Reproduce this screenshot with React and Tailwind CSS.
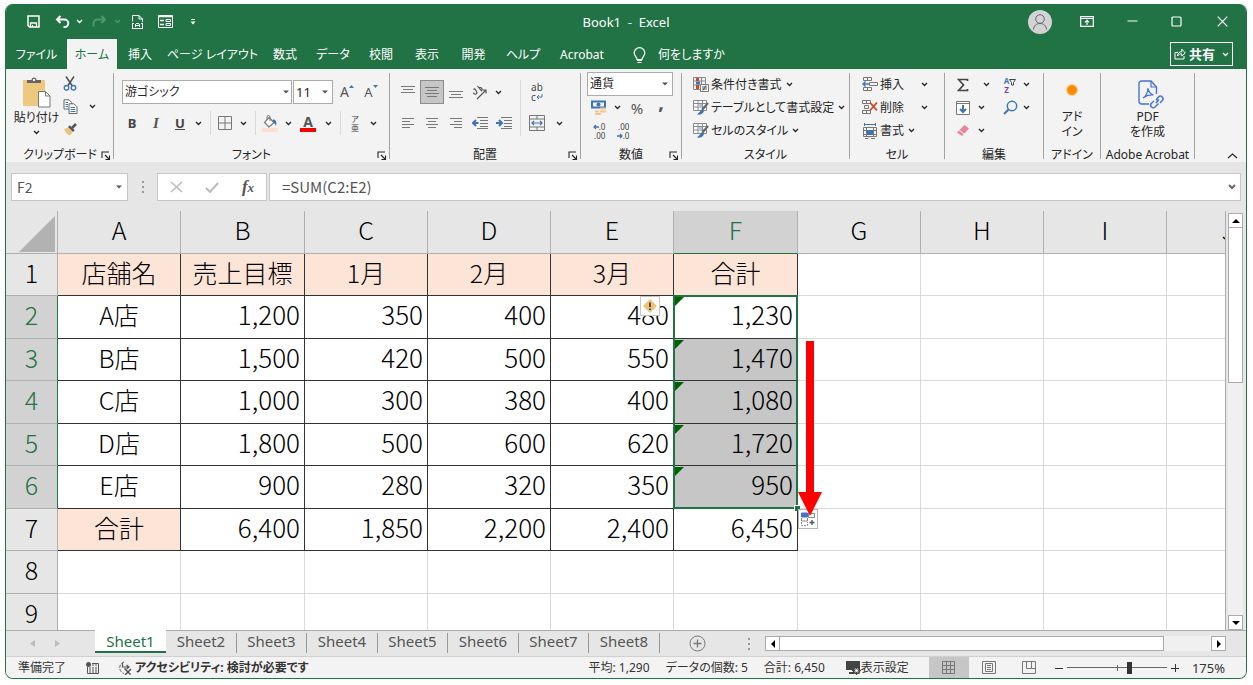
import clsx from 'clsx';

const TABS = [
  { label: 'ファイル', width: 'w-[61px]' },
  { label: 'ホーム', width: 'w-[50px]', active: true },
  { label: '挿入', width: 'w-[46px]' },
  { label: 'ページ レイアウト', width: 'w-[99px]' },
  { label: '数式', width: 'w-[46px]' },
  { label: 'データ', width: 'w-[50px]' },
  { label: '校閲', width: 'w-[46px]' },
  { label: '表示', width: 'w-[46px]' },
  { label: '開発', width: 'w-[47px]' },
  { label: 'ヘルプ', width: 'w-[52px]' },
  { label: 'Acrobat', width: 'w-[66px]' },
];

const COLUMNS = [
  { name: 'A', width: 'w-[123px]' },
  { name: 'B', width: 'w-[124px]' },
  { name: 'C', width: 'w-[123px]' },
  { name: 'D', width: 'w-[123px]' },
  { name: 'E', width: 'w-[123px]' },
  { name: 'F', width: 'w-[124px]' },
  { name: 'G', width: 'w-[123px]' },
  { name: 'H', width: 'w-[123px]' },
  { name: 'I', width: 'w-[123px]' },
  { name: 'J', width: 'w-[123px]' },
];

const ROWS = [
  ['店舗名', '売上目標', '1月', '2月', '3月', '合計'],
  ['A店', '1,200', '350', '400', '480', '1,230'],
  ['B店', '1,500', '420', '500', '550', '1,470'],
  ['C店', '1,000', '300', '380', '400', '1,080'],
  ['D店', '1,800', '500', '600', '620', '1,720'],
  ['E店', '900', '280', '320', '350', '950'],
  ['合計', '6,400', '1,850', '2,200', '2,400', '6,450'],
  [],
  [],
];

const SHEETS = ['Sheet1', 'Sheet2', 'Sheet3', 'Sheet4', 'Sheet5', 'Sheet6', 'Sheet7', 'Sheet8'];

const SELECTED_COL = 5;
const isSelectedRow = (row) => row >= 1 && row <= 5;

function Icon({ w = 16, h = 16, children, className }) {
  return (
    <svg
      width={w}
      height={h}
      viewBox={`0 0 ${w} ${h}`}
      fill="none"
      stroke="currentColor"
      className={clsx('shrink-0', className)}
      aria-hidden="true"
    >
      {children}
    </svg>
  );
}

function Chevron({ className }) {
  return (
    <Icon w={7} h={5} className={className}>
      <path d="M1 1l2.5 2.5L6 1" strokeWidth="1.3" />
    </Icon>
  );
}

function ChevronButton({ label, className }) {
  return (
    <button
      type="button"
      aria-label={label}
      className={clsx('flex h-5 w-3 shrink-0 items-center justify-center', className)}
    >
      <Chevron />
    </button>
  );
}

function Tool({ label, width = 'w-6', height = 'h-6', className, children }) {
  return (
    <button
      type="button"
      aria-label={label}
      className={clsx('flex shrink-0 items-center justify-center', height, width, className)}
    >
      {children}
    </button>
  );
}

function Divider() {
  return <span className="mr-0.5 ml-1.5 h-6 w-px shrink-0 bg-[#d8d8d8]" />;
}

function Triangle({ className = 'fill-[#555]' }) {
  return (
    <Icon w={6} h={4} className={className}>
      <path d="M0 .5h6L3 3.5z" stroke="none" fill="inherit" />
    </Icon>
  );
}

function Group({ label, width, launcher, children }) {
  return (
    <section
      aria-label={label}
      className={clsx('flex h-[86px] shrink-0 flex-col border-r border-[#a3a3a3]', width)}
    >
      <div className="h-[74px] shrink-0">{children}</div>
      <div className="relative text-center leading-[15px] whitespace-nowrap">
        {label}
        {launcher && (
          <button
            type="button"
            aria-label={`${label}の設定`}
            className="absolute top-1 right-0.5"
          >
            <Icon w={10} h={9}>
              <path d="M1 7V1h7M4 4l4 4M8.500 4.500V8.500H4.500" strokeWidth="1.1" />
            </Icon>
          </button>
        )}
      </div>
    </section>
  );
}

function TitleBar() {
  return (
    <header className="grid h-[35px] grid-cols-[1fr_auto_1fr] items-center text-white">
      <div className="flex items-center pl-[15px]">
        <Tool label="上書き保存">
          <Icon w={13} h={13}>
            <path d="M1 1h11v11H2.500L1 10.500z" strokeWidth="1.500" />
            <path d="M3.500 12V8h6v4" strokeWidth="1.300" />
            <path d="M5.500 10v2" />
          </Icon>
        </Tool>
        <Tool label="元に戻す" width="w-7" className="ml-1">
          <Icon w={16} h={14}>
            <path d="M5.500 1L2 4.500 5.500 8M2 4.500h7.500a3.800 3.800 0 0 1 0 7.600H8.500" strokeWidth="2" />
          </Icon>
        </Tool>
        <ChevronButton label="元に戻す履歴" className="-ml-1" />
        <Tool label="やり直し" width="w-7" className="text-[#4d9670]">
          <Icon w={16} h={14}>
            <path d="M10.500 1L14 4.500 10.500 8M14 4.500H6.500a4 4 0 0 0-4 4v3" strokeWidth="2" />
          </Icon>
        </Tool>
        <ChevronButton label="やり直し履歴" className="-ml-0.5 text-[#4d9670]" />
        <Tool label="印刷プレビュー" className="ml-0.5">
          <Icon w={13} h={16}>
            <path d="M1.500 7.500V1.500h6.500l3.500 3.500v3M8 1.500V5h3.500" />
            <path d="M1 9.500h2m2 0h3m2 0h2M1 14.500h11M1.500 9v5M11.500 9v5M4.500 10v3M8.500 10v3M4.500 11.500h4" />
          </Icon>
        </Tool>
        <Tool label="フォーム" className="ml-1">
          <Icon w={15} h={13}>
            <path d="M.5.5h14v12H.5z" />
            <path d="M0 1.500h15M2 5.500h4M2 9.500h4" strokeWidth="1.500" />
            <path d="M8 4.500h4.500v2H8zM8 8.500h4.500v2H8z" />
          </Icon>
        </Tool>
        <Tool label="クイック アクセス ツール バーのユーザー設定" className="ml-1">
          <Icon w={6} h={6}>
            <path d="M1 .5h4" />
            <path d="M.5 2.500h5L3 5.500z" fill="currentColor" stroke="none" />
          </Icon>
        </Tool>
      </div>
      <h1 className="text-[13px] whitespace-pre">Book1  -  Excel</h1>
      <div className="flex items-center justify-end">
        <button type="button" aria-label="アカウント" className="mr-4">
          <Icon w={24} h={24} className="text-[#666]">
            <circle cx="12" cy="12" r="12" fill="#d3d3d3" stroke="none" />
            <circle cx="12" cy="9" r="4.300" />
            <path d="M5.500 19.500c.3-4 3-6 6.500-6s6.200 2 6.500 6" />
          </Icon>
        </button>
        <Tool label="リボンの表示オプション" width="w-[38px]">
          <Icon w={14} h={11}>
            <path d="M.7.7h12.600v9.600H.7zM1 2.500h12M7 9V4.500M5 6.300l2-2 2 2" strokeWidth="1.200" />
          </Icon>
        </Tool>
        <Tool label="最小化" width="w-11" className="ml-1">
          <Icon w={11} h={11}>
            <path d="M.5 5h10" strokeWidth="1.200" />
          </Icon>
        </Tool>
        <Tool label="最大化" width="w-11">
          <Icon w={11} h={11}>
            <rect x="1" y="1" width="9" height="9" rx="1" strokeWidth="1.200" />
          </Icon>
        </Tool>
        <Tool label="閉じる" width="w-12">
          <Icon w={11} h={11}>
            <path d="M.7.7l9.600 9.600M10.300.7L.7 10.300" strokeWidth="1.200" />
          </Icon>
        </Tool>
      </div>
    </header>
  );
}

function TabBar() {
  return (
    <nav className="flex h-[30px] items-center text-white">
      {TABS.map((tab) => (
        <button
          key={tab.label}
          type="button"
          className={clsx(
            'h-full shrink-0 pt-0.5 text-center whitespace-nowrap',
            tab.width,
            tab.active && 'bg-[#f3f3f3] text-[#217346]'
          )}
        >
          {tab.label}
        </button>
      ))}
      <button type="button" className="ml-[18px] flex items-center gap-3 pt-0.5">
        <Icon w={13} h={17}>
          <path
            d="M4 12.500c0-2.500-2.800-3.500-2.800-6.500a5.300 5.300 0 0 1 10.600 0c0 3-2.800 4-2.800 6.500zM4.500 15.500h4M4 13.500h5"
            strokeWidth="1.200"
          />
        </Icon>
        何をしますか
      </button>
      <button
        type="button"
        className="mr-[13px] ml-auto flex h-6 items-center gap-[3px] border border-white px-[3px] font-bold"
      >
        <Icon w={12} h={12}>
          <path d="M4 4.500H1v6.500h9V8" />
          <path d="M3.500 8c.3-3 2-4.300 4.300-4.300V1.200L11.300 5 7.800 8V5.800C6 5.800 4.700 6.500 3.500 8z" />
        </Icon>
        <span className="text-[13px]">共有</span>
        <Chevron className="ml-1" />
      </button>
    </nav>
  );
}

function ClipboardGroup() {
  return (
    <Group label="クリップボード" width="w-[107px]" launcher>
      <div className="flex pt-1 pl-2">
        <button type="button" className="flex w-[43px] shrink-0 flex-col items-center">
          <Icon w={29} h={31}>
            <path d="M1 3h22v26H1z" fill="#edc87e" stroke="none" />
            <path d="M5 6V3h4.500a2.500 2.500 0 0 1 5 0H19v3z" fill="#666" stroke="none" />
            <circle cx="12" cy="3" r="1.200" fill="#f3f3f3" stroke="none" />
            <path d="M16.500 14.500h7l4.500 4.500v11H16.500z" fill="#fff" stroke="#777" />
            <path d="M23.500 14.500V19H28" stroke="#777" />
          </Icon>
          <span className="mt-0.5 leading-4 whitespace-nowrap">貼り付け</span>
          <Chevron className="mt-1" />
        </button>
        <div className="-mt-1.5 flex flex-col -space-y-px">
          <Tool label="切り取り">
            <Icon w={14} h={15}>
              <path d="M3 .5l6.300 9.500M11 .5L4.700 10" stroke="#555" strokeWidth="1.600" />
              <circle cx="3.500" cy="11.800" r="2.300" stroke="#3c76b5" strokeWidth="1.300" />
              <circle cx="10.500" cy="11.800" r="2.300" stroke="#3c76b5" strokeWidth="1.300" />
            </Icon>
          </Tool>
          <div className="flex items-center">
            <Tool label="コピー">
              <Icon w={15} h={15}>
                <path d="M1 .8h5l2.500 2.500V10H1z" fill="#fff" stroke="#666" />
                <path d="M6 4.800h5l3 3v6.700H6z" fill="#fff" stroke="#666" />
                <path d="M2.500 3.500h2.500M2.500 5.500h2.500M2.500 7.500h2.500M7.500 8.500h4.500M7.500 10.500h5M7.500 12.500h5" stroke="#3c76b5" />
              </Icon>
            </Tool>
            <ChevronButton label="コピーのオプション" className="ml-1" />
          </div>
          <Tool label="書式のコピー/貼り付け">
            <Icon w={14} h={13}>
              <path d="M1 6l4-1.500 4.500 4.500L7 12.500C4.500 11.500 2.500 9.500 1 6z" fill="#edc17c" stroke="none" />
              <path d="M5 4l5 5 1.700-1.700-5-5z" fill="#555" stroke="none" />
              <path d="M9 5l4-4" stroke="#555" strokeWidth="2.500" />
            </Icon>
          </Tool>
        </div>
      </div>
    </Group>
  );
}

function FontGroup() {
  return (
    <Group label="フォント" width="w-[276px]" launcher>
      <div className="flex h-full flex-col gap-[7px] pt-[7px] pl-2">
        <div className="flex h-6 items-center">
          <div className="flex h-6 w-[170px] items-center border border-[#ababab] bg-white px-0.5">
            <input
              aria-label="フォント名"
              defaultValue="游ゴシック"
              className="w-full min-w-0 bg-transparent outline-none"
            />
            <Triangle />
          </div>
          <div className="ml-px flex h-6 w-10 items-center border border-[#ababab] bg-white px-0.5">
            <input
              aria-label="フォント サイズ"
              defaultValue="11"
              className="w-full min-w-0 bg-transparent text-[13px] outline-none"
            />
            <Triangle className="mr-0.5 fill-[#555]" />
          </div>
          <Tool label="フォント サイズの拡大" className="ml-0.5">
            <span className="text-[14px] text-[#555]">A</span>
            <Icon w={5} h={3} className="mb-3">
              <path d="M0 3L2.500 0 5 3z" fill="#3c76b5" stroke="none" />
            </Icon>
          </Tool>
          <Tool label="フォント サイズの縮小">
            <span className="text-[13px] text-[#555]">A</span>
            <Icon w={5} h={3} className="mb-3">
              <path d="M0 0l2.500 3L5 0z" fill="#3c76b5" stroke="none" />
            </Icon>
          </Tool>
        </div>
        <div className="-ml-0.5 flex h-6 items-center">
          <Tool label="太字">
            <b className="text-[13px] text-[#444]">B</b>
          </Tool>
          <Tool label="斜体">
            <i className="font-['Liberation_Serif',serif] text-[15px] font-bold text-[#555]">I</i>
          </Tool>
          <Tool label="下線">
            <b className="text-[13px] text-[#444] underline">U</b>
          </Tool>
          <ChevronButton label="下線の種類" />
          <Divider />
          <Tool label="罫線">
            <Icon w={15} h={14}>
              <path d="M.5.5h13v13H.5zM7 1v12M1 7h12" stroke="#777" />
            </Icon>
          </Tool>
          <ChevronButton label="罫線の種類" />
          <Divider />
          <Tool label="塗りつぶしの色">
            <Icon w={16} h={17}>
              <path d="M7 2.500l5 5L7 12 2.500 7.500z" fill="#fff" stroke="#777" strokeWidth="1.200" />
              <path d="M5 5V2a1.500 1.500 0 0 1 3 0v4" stroke="#777" />
              <path d="M11 4.500c3 0 4 2.500 3 6.500-.7-2-1.500-3-3-3.500z" fill="#3c76b5" stroke="none" />
              <path d="M0 13h16v4H0z" fill="#fbe0d3" stroke="none" />
            </Icon>
          </Tool>
          <ChevronButton label="塗りつぶしの色の選択" />
          <Tool label="フォントの色" width="w-7">
            <span className="border-b-4 border-[#f00000] px-[3px] text-[14px] leading-[13px] font-bold text-[#555]">
              A
            </span>
          </Tool>
          <ChevronButton label="フォントの色の選択" />
          <Divider />
          <Tool label="ふりがなの表示">
            <span className="flex flex-col text-[8px] leading-[9px] text-[#444]">
              <span>ア</span>
              <span>亜</span>
            </span>
          </Tool>
          <ChevronButton label="ふりがなの設定" />
        </div>
      </div>
    </Group>
  );
}

function Lines({ d, className = 'text-[#777]' }) {
  return (
    <Icon w={16} h={14} className={className}>
      <path d={d} />
    </Icon>
  );
}

function AlignmentGroup() {
  return (
    <Group label="配置" width="w-[191px]" launcher>
      <div className="flex h-full pt-[7px] pl-1.5">
        <div className="flex w-[122px] flex-col gap-[7px]">
          <div className="flex h-6 items-center">
            <Tool label="上揃え">
              <Lines d="M1 1.500h14M3 4.500h10M1 7.500h14" />
            </Tool>
            <Tool label="上下中央揃え" className="border border-[#8c8c8c] bg-[#c6c6c6]">
              <Lines d="M1 2.500h14M3 5.500h10M1 8.500h14M3 11.500h10" />
            </Tool>
            <Tool label="下揃え">
              <Lines d="M1 6.500h14M3 9.500h10M1 12.500h14" />
            </Tool>
            <Tool label="方向">
              <Icon w={16} h={16} className="text-[#555]">
                <path d="M1.500 5.500l1.500-1M1.500 8.500a1.700 1.700 0 1 0 3.200-.8L2.800 4.800M5.500 2l4 5M7 4.200a1.800 1.800 0 1 1 2 2.900" strokeWidth="1.200" />
                <path d="M5 15l8.500-8.500M10.500 6h3.500v3.500" strokeWidth="1.200" />
              </Icon>
            </Tool>
            <ChevronButton label="方向の選択" />
          </div>
          <div className="flex h-6 items-center">
            <Tool label="左揃え">
              <Lines d="M2 2.500h12M2 5.500h8M2 8.500h12M2 11.500h8" />
            </Tool>
            <Tool label="中央揃え">
              <Lines d="M2 2.500h12M4 5.500h8M2 8.500h12M4 11.500h8" />
            </Tool>
            <Tool label="右揃え">
              <Lines d="M2 2.500h12M6 5.500h8M2 8.500h12M6 11.500h8" />
            </Tool>
            <Tool label="インデントを減らす">
              <Icon w={16} h={14}>
                <path d="M5 1.500h11M8 4.500h8M8 7.500h8M8 10.500h8M5 12.500h11" stroke="#777" />
                <path d="M6.500 7H1.500M4 4L1 7l3 3" stroke="#3c76b5" strokeWidth="2" />
              </Icon>
            </Tool>
            <Tool label="インデントを増やす">
              <Icon w={16} h={14}>
                <path d="M5 1.500h11M8 4.500h8M8 7.500h8M8 10.500h8M5 12.500h11" stroke="#777" />
                <path d="M0 7h5M3 4l3 3-3 3" stroke="#3c76b5" strokeWidth="2" />
              </Icon>
            </Tool>
          </div>
        </div>
        <span className="ml-0.5 h-14 w-px bg-[#d8d8d8]" />
        <div className="flex flex-col gap-[7px] pl-1">
          <Tool label="折り返して全体を表示する">
            <span className="flex flex-col text-[10px] leading-[10px] text-[#444]">
              <span>ab</span>
              <span className="flex items-center">
                c
                <Icon w={7} h={6}>
                  <path d="M6 0v3H1M3 1L1 3l2 2" stroke="#3c76b5" />
                </Icon>
              </span>
            </span>
          </Tool>
          <div className="flex h-6 items-center">
            <Tool label="セルを結合して中央揃え">
              <Icon w={16} h={16}>
                <path d="M.5.5h15v15H.5zM.5 4h15M.5 12h15M8 .5V4M8 12v3.500" stroke="#777" />
                <path d="M3 8h10M5 6L3 8l2 2M11 6l2 2-2 2" stroke="#3c76b5" strokeWidth="1.200" />
              </Icon>
            </Tool>
            <ChevronButton label="セル結合のオプション" className="ml-1" />
          </div>
        </div>
      </div>
    </Group>
  );
}

function NumberGroup() {
  return (
    <Group label="数値" width="w-[101px]" launcher>
      <div className="flex flex-col pl-1.5">
        <div className="relative -mt-px flex h-6 w-[86px] items-center border border-[#ababab] bg-white">
          <select
            aria-label="数値の書式"
            className="h-full w-full appearance-none bg-transparent pl-0.5 outline-none"
          >
            <option>通貨</option>
          </select>
          <Triangle className="pointer-events-none absolute right-1 fill-[#555]" />
        </div>
        <div className="flex h-[23px] items-center">
          <Tool label="通貨表示形式">
            <Icon w={16} h={15}>
              <path d="M1 1.500h13v6H1z" stroke="#3c76b5" strokeWidth="2" />
              <circle cx="7.500" cy="4.500" r="2" fill="#3c76b5" stroke="none" />
              <path d="M9 7.500h6v2H9zM9 10.500h6v2H9zM4 10.500h4v2H4zM4 13h6v2H4z" fill="#f3c58c" stroke="none" />
            </Icon>
          </Tool>
          <ChevronButton label="通貨の選択" />
          <Tool label="パーセント スタイル" width="w-7">
            <span className="text-[15px] text-[#555]">%</span>
          </Tool>
          <Tool label="桁区切りスタイル" width="w-5">
            <span className="pb-3 text-[20px] font-bold text-[#555]">,</span>
          </Tool>
        </div>
        <div className="flex h-6 items-center text-[8px] leading-[9px] text-[#444]">
          <Tool label="小数点以下の表示桁数を増やす">
            <span className="flex flex-col items-end">
              <span className="flex items-center">
                <Icon w={6} h={6}>
                  <path d="M6 3H1M3 1L1 3l2 2" stroke="#3c76b5" strokeWidth="1.300" />
                </Icon>
                .0
              </span>
              <span>.00</span>
            </span>
          </Tool>
          <Tool label="小数点以下の表示桁数を減らす">
            <span className="flex flex-col items-end">
              <span>.00</span>
              <span className="flex items-center">
                <Icon w={6} h={6}>
                  <path d="M0 3h5M3 1l2 2-2 2" stroke="#3c76b5" strokeWidth="1.300" />
                </Icon>
                .0
              </span>
            </span>
          </Tool>
        </div>
      </div>
    </Group>
  );
}

function RowButton({ icon, label, wide }) {
  return (
    <button type="button" className="flex h-[23px] items-center gap-0.5 whitespace-nowrap">
      {icon}
      {label && <span>{label}</span>}
      <Chevron className={wide ? 'ml-[15px]' : 'ml-0.5'} />
    </button>
  );
}

function TableBrushIcon() {
  return (
    <Icon w={16} h={15}>
      <path d="M.5.5h13v10H.5z" fill="#fff" stroke="#888" />
      <path d="M.5 3.500h13M.5 7h13M5 .5v10M9.500 .5v10" stroke="#888" />
      <path d="M5 4h4v3H5z" fill="#a9c8e8" stroke="none" />
      <path d="M15 3l-6 7" stroke="#666" strokeWidth="2" />
      <path d="M9.500 9L4 14.500c3 .5 6 0 7-3.500z" fill="#3c76b5" stroke="none" />
    </Icon>
  );
}

function StylesGroup() {
  return (
    <Group label="スタイル" width="w-[168px]">
      <div className="flex flex-col items-start pl-[11px]">
        <RowButton
          label="条件付き書式"
          icon={
            <Icon w={16} h={15}>
              <path d="M.5.5h12v12H.5zM.5 4h12M.5 8h12M8.500 .5v12" stroke="#888" />
              <path d="M3 1h3v3H3zM3 8h3v4H3z" fill="#d24726" stroke="none" />
              <path d="M3 4.500h4v3H3z" fill="#3c76b5" stroke="none" />
              <path d="M7.500 7.500h8v7h-8z" fill="#fff" stroke="#777" />
              <path d="M9 10h5M9 12h5M13 8.500l-3 5" stroke="#555" />
            </Icon>
          }
        />
        <RowButton label="テーブルとして書式設定" icon={<TableBrushIcon />} />
        <RowButton label="セルのスタイル" icon={<TableBrushIcon />} />
      </div>
    </Group>
  );
}

function CellsGroup() {
  return (
    <Group label="セル" width="w-[95px]">
      <div className="flex flex-col items-start pl-3">
        <RowButton
          label="挿入"
          wide
          icon={
            <Icon w={16} h={15}>
              <path d="M1.500.5h8v3h-8zM5.500.5v3M1.500 10.500h8v3h-8zM5.500 10.500v3M7.500 5.500h8v3h-8z" stroke="#777" />
              <path d="M7 7H1M3.500 4.500L1 7l2.500 2.500" stroke="#3c76b5" strokeWidth="1.400" />
            </Icon>
          }
        />
        <RowButton
          label="削除"
          wide
          icon={
            <Icon w={16} h={15}>
              <path d="M.5.5h8v3h-8zM4.500.5v3M2.500 5.500h4v3h-4zM.5 10.500h8v3h-8zM4.500 10.500v3" stroke="#777" />
              <path d="M8 2.500l7 8M15 2.500l-7 8" stroke="#d24726" strokeWidth="1.800" />
            </Icon>
          }
        />
        <RowButton
          label="書式"
          icon={
            <Icon w={16} h={16}>
              <path d="M1.500 4.500h13v9h-13zM4.500 4.500v9M11.500 4.500v9M1.500 7.500h13M1.500 11.500h13" stroke="#777" />
              <path d="M5 7h6v5H5z" fill="#3c76b5" stroke="none" />
              <path d="M2.500 1.500h11M2.500 0v3M13.500 0v3" stroke="#3c76b5" />
              <path d="M3 15.500h3l1-1M9 15.500h4" stroke="#777" />
            </Icon>
          }
        />
      </div>
    </Group>
  );
}

function EditingGroup() {
  return (
    <Group label="編集" width="w-[99px]">
      <div className="flex pl-1.5">
        <div className="flex w-[47px] flex-col">
          <div className="flex h-[23px] items-center">
            <Tool label="オート SUM">
              <Icon w={12} h={14}>
                <path d="M10.500 3V1.500H1.500L6.500 7l-5 5.500h9V11" stroke="#444" strokeWidth="1.700" />
              </Icon>
            </Tool>
            <ChevronButton label="オート SUM のオプション" className="ml-[5px]" />
          </div>
          <div className="flex h-[23px] items-center">
            <Tool label="フィル">
              <Icon w={14} h={14}>
                <path d="M.5.5h13v13H.5zM.5 2.500h13" fill="#fff" stroke="#777" />
                <path d="M7 4v7M4 8l3 3 3-3" stroke="#3c76b5" strokeWidth="2" />
              </Icon>
            </Tool>
            <ChevronButton label="フィルの種類" />
          </div>
          <div className="flex h-[23px] items-center">
            <Tool label="クリア">
              <Icon w={14} h={13}>
                <path d="M1 8.500L8.500 1l4.500 3.500L6 12z" fill="#e8869a" stroke="none" />
                <path d="M3.300 6.300L8 10" stroke="#f3f3f3" />
              </Icon>
            </Tool>
            <ChevronButton label="クリアの種類" />
          </div>
        </div>
        <div className="flex flex-col">
          <div className="flex h-[23px] items-center">
            <Tool label="並べ替えとフィルター">
              <span className="flex flex-col text-[8px] leading-[9px] font-bold">
                <span className="text-[#3c76b5]">A</span>
                <span className="text-[#80449c]">Z</span>
              </span>
              <Icon w={7} h={7} className="mb-1">
                <path d="M.5.5h6L4.500 3.500V6h-2V3.500z" stroke="#444" />
              </Icon>
            </Tool>
            <ChevronButton label="並べ替えの種類" className="-ml-0.5" />
          </div>
          <div className="flex h-[23px] items-center">
            <Tool label="検索と選択">
              <Icon w={15} h={15}>
                <circle cx="9" cy="6" r="4.700" stroke="#3c76b5" strokeWidth="1.500" />
                <path d="M5.500 9.500L1 14" stroke="#3c76b5" strokeWidth="2" />
              </Icon>
            </Tool>
            <ChevronButton label="検索の種類" className="-ml-0.5" />
          </div>
        </div>
      </div>
    </Group>
  );
}

function Ribbon() {
  return (
    <div className="flex h-[93px] bg-[#f3f3f3] pt-1 pl-px text-[#262626]">
      <ClipboardGroup />
      <FontGroup />
      <AlignmentGroup />
      <NumberGroup />
      <StylesGroup />
      <CellsGroup />
      <EditingGroup />
      <Group label="アドイン" width="w-[57px]">
        <button type="button" className="flex w-full flex-col items-center leading-[15px]">
          <Icon w={14} h={34}>
            <circle cx="7" cy="17" r="5.500" fill="#ff8c00" stroke="#ffd9a8" />
          </Icon>
          <span className="mt-0.5">アド</span>
          <span>イン</span>
        </button>
      </Group>
      <Group label="Adobe Acrobat" width="w-[94px]">
        <button type="button" className="flex w-full flex-col items-center leading-[15px]">
          <Icon w={26} h={30} className="mt-1.5 ml-1.5 text-[#4472d8]">
            <path d="M18.500 15V8L13 2H3.500A2.500 2.500 0 0 0 1 4.500v18A2.500 2.500 0 0 0 3.500 25H11" strokeWidth="1.400" />
            <path d="M13 2v6h5.500" strokeWidth="1.200" />
            <path d="M5 19c3-1.500 5-6 5-10 .5 3.500 2.500 6 5.500 7-3-.5-7 .3-10.500 3z" strokeWidth="1.200" />
            <path
              d="M18 21l2.500-3a2.600 2.600 0 0 1 4 3.300L22 24M20 21l-1 1M21 20.500l-3 3.500M20.500 24.500L17 28a2.600 2.600 0 0 1-3.800-3.500L16 22"
              strokeWidth="1.500"
            />
          </Icon>
          <span>PDF</span>
          <span>を作成</span>
        </button>
      </Group>
      <button type="button" aria-label="リボンを折りたたむ" className="mr-2 mb-[3px] ml-auto self-end">
        <Icon w={11} h={6}>
          <path d="M1 5l4.500-4L10 5" strokeWidth="1.200" />
        </Icon>
      </button>
    </div>
  );
}

function GripDots() {
  return (
    <Icon w={2} h={12} className="text-[#999]">
      <path d="M1 0v12" strokeWidth="2" strokeDasharray="2 3" />
    </Icon>
  );
}

function FormulaBar() {
  return (
    <div className="flex items-center pt-[11px] pr-[5px] pb-2.5 pl-[5px] text-[#555] [font-feature-settings:normal]">
      <div className="flex h-7 w-[117px] items-center border border-[#c6c6c6] bg-white px-[5px]">
        <input
          aria-label="名前ボックス"
          defaultValue="F2"
          className="w-full min-w-0 bg-transparent font-['Noto_Sans_CJK_JP',sans-serif] text-[14px] outline-none"
        />
        <Triangle />
      </div>
      <div className="flex w-[29px] justify-center">
        <GripDots />
      </div>
      <div className="flex h-7 w-[110px] items-center border border-[#c6c6c6] bg-white">
        <Tool label="キャンセル" width="w-9">
          <Icon w={13} h={12} className="text-[#bbb]">
            <path d="M1 1l11 10M12 1L1 11" strokeWidth="1.600" />
          </Icon>
        </Tool>
        <Tool label="入力" width="w-9">
          <Icon w={14} h={11} className="text-[#bbb]">
            <path d="M1 6l4 4 8-9" strokeWidth="2" />
          </Icon>
        </Tool>
        <Tool label="関数の挿入" width="w-9">
          <i className="font-['Liberation_Serif',serif] text-[17px] font-bold text-[#555]">
            f<span className="text-[13px]">x</span>
          </i>
        </Tool>
      </div>
      <div className="ml-0.5 flex h-7 flex-1 items-center border border-[#c6c6c6] bg-white pr-1 pl-3">
        <input
          aria-label="数式バー"
          defaultValue="=SUM(C2:E2)"
          className="w-full min-w-0 bg-transparent font-['Noto_Sans_CJK_JP',sans-serif] text-[15px] outline-none"
        />
        <Icon w={8} h={6} className="text-[#666]">
          <path d="M1 1l3 3 3-3" strokeWidth="2" />
        </Icon>
      </div>
    </div>
  );
}

function cellClass(row, col, hasData) {
  const isHeading = (row === 0 && col <= 5) || (row === 6 && col === 0);
  const isSelected = col === SELECTED_COL && row >= 2 && row <= 5;
  return clsx(
    'relative overflow-hidden border-r border-b p-0 pb-1.5 whitespace-nowrap',
    hasData ? 'border-[#333]' : 'border-[#d9d9d9]',
    isHeading && 'bg-[#fce4d6]',
    isSelected && 'bg-[#c6c6c6]',
    row === 0 || col === 0 ? 'text-center' : 'pr-1 text-right text-[26px]'
  );
}

function Sheet() {
  return (
    <table className="w-max table-fixed border-separate border-spacing-0 bg-white font-['Noto_Sans_CJK_JP',sans-serif] text-[25px] leading-[34px] font-light text-black [font-feature-settings:normal]">
      <colgroup>
        <col className="w-[52px]" />
        {COLUMNS.map((col) => (
          <col key={col.name} className={col.width} />
        ))}
      </colgroup>
      <thead>
        <tr className="h-[43px]">
          <th className="border-r border-b border-[#b0b0b0] bg-[#e6e6e6] p-0" aria-label="すべて選択">
            <Icon w={36} h={36} className="mt-1 mr-0.5 ml-auto">
              <path d="M36 0v36H0z" fill="#b2b2b2" stroke="none" />
            </Icon>
          </th>
          {COLUMNS.map((col, i) => (
            <th
              key={col.name}
              scope="col"
              className={clsx(
                'border-r border-b p-0 pb-1.5 font-light',
                i === SELECTED_COL
                  ? 'border-r-[#b0b0b0] border-b-[#217346] bg-[#d2d2d2] text-[#217346]'
                  : 'border-[#b0b0b0] bg-[#e6e6e6]'
              )}
            >
              {col.name}
            </th>
          ))}
        </tr>
      </thead>
      <tbody>
        {ROWS.map((cells, row) => (
          <tr key={row} className={row % 2 === 0 ? 'h-[42px]' : 'h-[43px]'}>
            <th
              scope="row"
              className={clsx(
                'border-r border-b p-0 pb-1.5 font-light',
                isSelectedRow(row)
                  ? 'border-r-[#217346] border-b-[#b0b0b0] bg-[#d2d2d2] text-[#217346]'
                  : 'border-[#b0b0b0] bg-[#e6e6e6]'
              )}
            >
              {row + 1}
            </th>
            {COLUMNS.map((col, i) => (
              <td key={col.name} className={cellClass(row, i, i < cells.length)}>
                {cells[i]}
                {i === SELECTED_COL && isSelectedRow(row) && (
                  <Icon w={10} h={10} className="absolute top-0 left-0">
                    <path d="M1 1h9L1 10z" fill="#006100" stroke="none" />
                  </Icon>
                )}
              </td>
            ))}
          </tr>
        ))}
      </tbody>
    </table>
  );
}

// Selection frame, smart tags and the drag arrow float over the cells.
function SheetOverlay() {
  return (
    <>
      <div className="pointer-events-none absolute top-[84px] left-[667px] h-[214px] w-[125px] border-2 border-[#217346]">
        <span className="absolute -right-1 -bottom-1 size-[6px] border-t border-l border-white bg-[#217346]" />
      </div>
      <button
        type="button"
        aria-label="エラー チェック オプション"
        className="absolute top-[85px] left-[634px] flex size-5 items-center justify-center border border-[#c6c6c6] bg-white"
      >
        <Icon w={14} h={14}>
          <path d="M7 0l7 7-7 7-7-7z" fill="#eec27c" stroke="none" />
          <path d="M7 3.500v4.500M7 9.500v1.500" stroke="#444" strokeWidth="1.800" />
        </Icon>
      </button>
      <button
        type="button"
        aria-label="オートフィル オプション"
        className="absolute top-[298px] left-[792px] flex size-5 items-center justify-center border border-[#b5b5b5] bg-white"
      >
        <Icon w={14} h={14}>
          <path d="M.5 1h6v4h-6z" fill="#4472c4" stroke="#4472c4" />
          <path d="M7.500 1.500h6v4h-6zM.5 6v3h6V6" stroke="#888" />
          <path d="M.5 10v3.500h6V10" stroke="#888" strokeDasharray="2 1" />
          <path d="M11 8v5M8.500 10.500h5" stroke="#555" strokeWidth="1.400" />
        </Icon>
      </button>
      <Icon w={24} h={175} className="pointer-events-none absolute top-[130px] left-[792px]">
        <path d="M8 0h8v151h8L12 175 0 151h8z" fill="#ff0000" stroke="none" />
      </Icon>
    </>
  );
}

function ScrollButton({ label, points, className }) {
  return (
    <button
      type="button"
      aria-label={label}
      className={clsx(
        'flex size-[15px] shrink-0 items-center justify-center border border-[#ababab] bg-white',
        className
      )}
    >
      <Icon w={8} h={8}>
        <path d={points} fill="#000" stroke="none" />
      </Icon>
    </button>
  );
}

function SheetTabs() {
  return (
    <div className="flex h-[26px] border-t border-[#ababab] text-[15px] text-[#555]">
      <div className="flex w-[89px] shrink-0 items-center gap-5 pl-6 text-[#bbb]">
        <button type="button" aria-label="前のシート">
          <Icon w={5} h={7}>
            <path d="M5 0v7L0 3.500z" fill="currentColor" stroke="none" />
          </Icon>
        </button>
        <button type="button" aria-label="次のシート">
          <Icon w={5} h={7}>
            <path d="M0 0v7l5-3.500z" fill="currentColor" stroke="none" />
          </Icon>
        </button>
      </div>
      {SHEETS.map((sheet, i) =>
        i === 0 ? (
          <button
            key={sheet}
            type="button"
            className="-mt-px h-[23px] w-[71px] shrink-0 border-b-2 border-[#217346] bg-white leading-[22px] text-[#217346]"
          >
            {sheet}
          </button>
        ) : (
          <button
            key={sheet}
            type="button"
            className={clsx(
              'mt-0.5 flex h-5 shrink-0 items-start justify-center border-r border-[#999] leading-[17px]',
              i % 2 === 1 ? 'w-[71px]' : 'w-[70px]'
            )}
          >
            {sheet}
          </button>
        )
      )}
      <button type="button" aria-label="新しいシート" className="ml-[29px] shrink-0">
        <Icon w={17} h={17} className="text-[#777]">
          <circle cx="8.500" cy="8.500" r="7.500" />
          <path d="M8.500 4.500v8M4.500 8.500h8" strokeWidth="1.300" />
        </Icon>
      </button>
      <div className="flex flex-1 items-center pr-5 pl-[42px]">
        <GripDots />
        <div className="ml-[15px] flex flex-1 bg-[#f0f0f0]">
          <ScrollButton label="左へスクロール" points="M6 0v8L2 4z" />
          <div className="-ml-px h-[15px] w-[385px] border border-[#ababab] bg-white" />
          <ScrollButton label="右へスクロール" points="M2 0v8l4-4z" className="ml-auto" />
        </div>
      </div>
    </div>
  );
}

function StatusBar() {
  return (
    <footer className="flex h-[22px] items-center border-t border-[#d0d0d0] bg-[#f3f3f3] pl-3 whitespace-nowrap text-[#333]">
      <span>準備完了</span>
      <Icon w={13} h={12} className="ml-5 text-[#555]">
        <circle cx="2.500" cy="2.500" r="2.500" fill="currentColor" stroke="none" />
        <path d="M1.500 5v6.500h11v-10H6" />
        <path d="M6 3h6M3 6h8M3 8h8M3 10h8" strokeDasharray="2 1" />
      </Icon>
      <button type="button" className="ml-[18px] flex items-center gap-0.5 font-bold">
        <Icon w={16} h={14} className="text-[#555]">
          <path d="M7 1a6 6 0 0 0 0 11.500" strokeDasharray="3 1.500" />
          <path d="M5.500 2v4H12M9.500 4l2.500 2-2.500 2" strokeWidth="1.200" />
          <path d="M7.500 7.500l6 6M14 8l-6 6" strokeWidth="1.500" />
        </Icon>
        アクセシビリティ: 検討が必要です
      </button>
      <div className="ml-auto flex gap-4">
        <span>平均: 1,290</span>
        <span>データの個数: 5</span>
        <span>合計: 6,450</span>
      </div>
      <button type="button" className="ml-5 flex items-center">
        <Icon w={16} h={15} className="text-[#444]">
          <path d="M1 1h14v9H1z" fill="currentColor" stroke="none" />
          <path d="M4 13h5" strokeWidth="2" />
          <circle cx="11.500" cy="10.500" r="3" fill="#f3f3f3" strokeWidth="1.500" />
          <path d="M11.500 6v9M7 10.500h9M8.500 7.500l6 6M14.500 7.500l-6 6" />
          <circle cx="11.500" cy="10.500" r="1.500" fill="#f3f3f3" stroke="none" />
        </Icon>
        表示設定
      </button>
      <div className="ml-5 flex h-full text-[#777]">
        <Tool label="標準" width="w-10" height="h-full" className="bg-[#c6c6c6]">
          <Icon w={13} h={13}>
            <path d="M.5.5h12v12H.5zM4.500 0v13M8.500 0v13M0 4.500h13M0 8.500h13" />
          </Icon>
        </Tool>
        <Tool label="ページ レイアウト表示" width="w-10" height="h-full">
          <Icon w={14} h={13}>
            <path d="M.5.5h13v12H.5zM3.500 2.500h7v8h-7zM5 4.500h4M5 6.500h4M5 8.500h4" />
          </Icon>
        </Tool>
        <Tool label="改ページ プレビュー" width="w-10" height="h-full">
          <Icon w={14} h={13}>
            <path d="M.5.5h13v12H.5zM4.500.5v7h5v-7M9.500 7.500h4" />
          </Icon>
        </Tool>
      </div>
      <button type="button" aria-label="縮小" className="ml-0.5 flex w-4 justify-center">
        <Icon w={8} h={8}>
          <path d="M0 4.500h8" />
        </Icon>
      </button>
      <div className="relative flex h-4 w-[100px] items-center">
        <span className="absolute inset-x-0 h-px bg-[#666]" />
        <span className="absolute left-1/2 h-1.5 w-px bg-[#666]" />
        <input
          type="range"
          aria-label="ズーム"
          min="0"
          max="100"
          defaultValue="63"
          className="relative w-full appearance-none bg-transparent [&::-webkit-slider-thumb]:h-3 [&::-webkit-slider-thumb]:w-[5px] [&::-webkit-slider-thumb]:appearance-none [&::-webkit-slider-thumb]:bg-[#333]"
        />
      </div>
      <button type="button" aria-label="拡大" className="flex w-4 justify-center">
        <Icon w={8} h={8}>
          <path d="M0 4.500h8M4.500 0v8" />
        </Icon>
      </button>
      <button type="button" className="mr-[21px] ml-[9px] text-[13px]">175%</button>
    </footer>
  );
}

export default function App() {
  return (
    <main className="bg-white pt-1 pr-1.5 pb-[7px] pl-[5px] font-['Noto_Sans','Noto_Sans_CJK_JP',sans-serif] text-[12px] leading-4 [font-feature-settings:'palt']">
      <div className="overflow-hidden rounded-lg border-x border-b border-[#217346] bg-[#e6e6e6]">
        <div className="bg-[#217346]">
          <TitleBar />
          <TabBar />
        </div>
        <Ribbon />
        <FormulaBar />
        <div className="flex">
          <div className="relative h-[419px] min-w-0 flex-1 overflow-hidden border-r border-[#ababab]">
            <Sheet />
            <SheetOverlay />
          </div>
          <div className="mt-0.5 mr-[3px] ml-0.5 flex w-[15px] flex-col bg-[#f0f0f0]">
            <ScrollButton label="上へスクロール" points="M0 6h8L4 2z" />
            <div className="h-[155px] border border-t-0 border-[#ababab] bg-white" />
            <ScrollButton label="下へスクロール" points="M0 2h8L4 6z" className="mt-auto" />
          </div>
        </div>
        <SheetTabs />
        <StatusBar />
      </div>
    </main>
  );
}
